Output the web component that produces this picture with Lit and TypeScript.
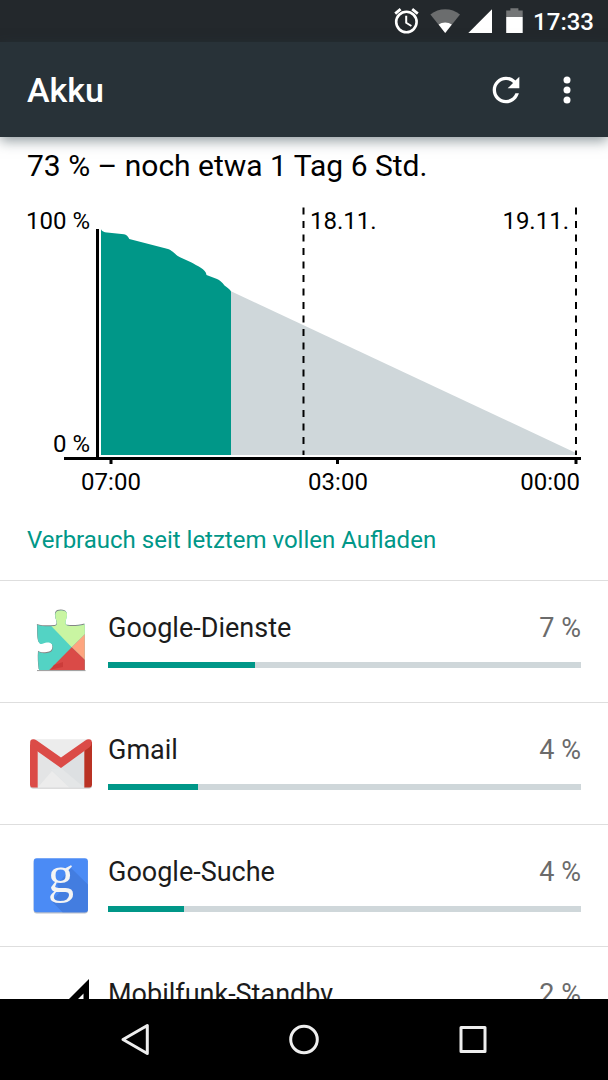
import { LitElement, html, css, svg } from "lit";
import { customElement, property } from "lit/decorators.js";

type IconName = "services" | "gmail" | "search" | "cell";

interface Consumer {
  icon: IconName;
  name: string;
  percent: number;
  bar: number;
}

const CONSUMERS: Consumer[] = [
  { icon: "services", name: "Google-Dienste", percent: 7, bar: 31 },
  { icon: "gmail", name: "Gmail", percent: 4, bar: 19 },
  { icon: "search", name: "Google-Suche", percent: 4, bar: 16 },
  { icon: "cell", name: "Mobilfunk-Standby", percent: 2, bar: 9 },
];

const PIECE =
  "M10.3 17.8C16 19.6 22 19.4 27.5 19C30.6 18.6 30.2 16.4 29.4 13.6C28.5 10.8 28 8.2 28.5 6.4C29.3 4 31.4 3.4 34.2 3.4C37 3.4 39.3 4.2 39.9 6.4C40.3 8.4 39.5 11 38.8 13.6C38.3 16.4 38.2 18.4 41 18.7C46.5 19.2 52 18.8 57.8 17.4V63H12C11.3 57 10.8 51 11.4 44.6C14 46.6 17 46.4 20 46C23.8 45.6 25.8 43.8 25.8 40.4C25.8 36.8 23.6 35.4 20 35.6C17 35.9 14.6 37.8 12.6 36.4C10 34.2 10.6 24 10.3 17.8Z";

const ICONS: Record<IconName, unknown> = {
  services: svg`
    <defs><clipPath id="piece"><path d=${PIECE} /></clipPath></defs>
    <path d=${PIECE} fill="#858585" transform="translate(-0.4 -0.9)" />
    <path d="M10 63.6H58.5" stroke="#9a9a9a" stroke-width="1" />
    <g clip-path="url(#piece)">
      <rect width="68" height="68" fill="#53d3c4" />
      <path d="M8 2.3L44.7 40.3L68 17V0H8Z" fill="#c9f5a2" />
      <path d="M44.7 40.3L68 17V63Z" fill="#fea57f" />
      <path d="M44.7 40.3L68 62.5V68H17.3Z" fill="#da4a47" />
      <path d="M27 58L36 55V60L24 62.5Z" fill="#cc3c3a" />
    </g>`,
  gmail: svg`
    <rect x="3" y="11" width="62" height="48.6" rx="3" fill="#b9b9b9" />
    <rect x="3" y="10.3" width="62" height="48.2" rx="3" fill="#ececec" />
    <path d="M10.7 22L34 38L57.3 22V58.5H10.7Z" fill="#e3e4e5" />
    <path d="M23 40L34 39L57.3 22V58.5H42.5Z" fill="#dde0e2" />
    <path d="M34 39L57.3 58.5H42.5L23 40Z" fill="#e4e6e7" />
    <path d="M10.7 58.5L25 42L42.5 58.5Z" fill="#ececec" />
    <path d="M57.3 14L65 13V55.5Q65 58.5 62 58.5H57.3Z" fill="#b93224" />
    <path d="M10.7 22.5L3.2 16V13.3Q3.2 10.3 6.2 10.3Q8 10.3 9.8 11.5L34 28.4L58.2 11.5Q60 10.3 61.8 10.3Q64.8 10.3 64.8 13.3Q64.8 16 62.8 18L34 39Z" fill="#db4b47" />
    <path d="M3 13.3V55.5Q3 58.5 6 58.5H10.7V21L3.4 15.4Z" fill="#db4b47" />`,
  search: svg`
    <rect x="6.7" y="9" width="54.2" height="53.4" rx="3" fill="#b8bec8" />
    <rect x="6.7" y="7.3" width="54.2" height="53.9" rx="3" fill="#4b8bf5" />
    <path d="M44 17L60.9 33.5V58.2Q60.9 61.2 57.9 61.2H35.5L24.5 50L34 40L30 34Z" fill="#437de0" />
    <text x="21" y="41" font-family="Liberation Serif, serif" font-size="52" fill="#f4f4f4">g</text>`,
  cell: svg`<path d="M62 6V62H6ZM56.5 20.5L20.5 56.5H56.5Z" fill="#000" fill-rule="evenodd" />`,
};

@customElement("status-bar")
export class StatusBar extends LitElement {
  static styles = css`
    :host {
      display: flex;
      align-items: center;
      justify-content: flex-end;
      height: 42px;
      padding-right: 14px;
      background: #23282c;
      color: #fff;
    }
    .icon {
      display: block;
      height: 42px;
    }
    .time {
      margin-left: 9px;
      font-size: 24px;
      line-height: 30px;
      padding-top: 2px;
      font-weight: 500;
    }
  `;

  render() {
    return html`
      <svg class="icon" width="132" height="42" viewBox="392 0 132 42" role="img" aria-label="Wecker, WLAN, Mobilfunk, Akku">
        <g fill="none" stroke="#fff">
          <circle cx="406.4" cy="22" r="10.2" stroke-width="2.6" />
          <path d="M406.2 15.8V22.8L411.4 26" stroke-width="2" />
          <path d="M395.2 13.6L400.6 9.2M412.2 9.2L417.8 13.6" stroke-width="2.8" />
        </g>
        <path d="M430.4 14.4Q437 9.2 445.2 9.2Q453.4 9.2 460 14.4L445.2 33Z" fill="#6b6d6e" />
        <path d="M438.6 24.6Q441.4 22.6 445.2 22.6Q449 22.6 451.8 24.6L445.2 33Z" fill="#fff" />
        <path d="M492 9.3V33H468.3Z" fill="#fff" />
        <path d="M506.2 10.6H510.4V8.3H518.4V10.6H522.7V17H506.2Z" fill="#747677" />
        <path d="M506.2 17H522.7V33H506.2Z" fill="#fff" />
      </svg>
      <span class="time">17:33</span>
    `;
  }
}

@customElement("app-bar")
export class AppBar extends LitElement {
  static styles = css`
    :host {
      display: flex;
      align-items: center;
      gap: 21px;
      height: 95px;
      box-sizing: border-box;
      padding: 0 21px 0 27px;
      background: #283238;
      color: #fff;
      box-shadow: 0 4px 12px rgba(40, 60, 68, 0.5);
      position: relative;
      z-index: 1;
    }
    .title {
      flex: 1;
      margin: 0;
      font-size: 34px;
      line-height: 40px;
      font-weight: 500;
    }
    .action {
      display: block;
      padding: 0;
      border: 0;
      background: none;
      color: inherit;
    }
    .icon {
      display: block;
      fill: currentColor;
    }
  `;

  render() {
    return html`
      <h1 class="title">Akku</h1>
      <button class="action" aria-label="Aktualisieren">
        <svg class="icon" width="40" height="40" viewBox="0 0 24 24">
          <path d="M17.65 6.35C16.2 4.9 14.21 4 12 4c-4.42 0-7.99 3.58-7.99 8s3.57 8 7.99 8c3.73 0 6.84-2.55 7.73-6h-2.08c-.82 2.33-3.04 4-5.65 4-3.31 0-6-2.69-6-6s2.69-6 6-6c1.66 0 3.14.69 4.22 1.78L13 11h7V4l-2.35 2.35z" />
        </svg>
      </button>
      <button class="action" aria-label="Weitere Optionen">
        <svg class="icon" width="40" height="40" viewBox="0 0 24 24">
          <circle cx="12" cy="6" r="2.1" />
          <circle cx="12" cy="12" r="2.1" />
          <circle cx="12" cy="18" r="2.1" />
        </svg>
      </button>
    `;
  }
}

@customElement("battery-chart")
export class BatteryChart extends LitElement {
  static styles = css`
    :host {
      display: block;
    }
    .chart {
      display: block;
      width: 100%;
    }
    .label {
      font-size: 24px;
      fill: #000;
    }
    .end {
      text-anchor: end;
    }
    .middle {
      text-anchor: middle;
    }
    .level {
      fill: #009788;
    }
    .forecast {
      fill: #cfd7da;
    }
    .day {
      stroke: #000;
      stroke-width: 2;
      stroke-dasharray: 7 6.5;
    }
    .axis {
      stroke: #000;
      stroke-width: 3;
      fill: none;
    }
  `;

  render() {
    return html`
      <svg class="chart" viewBox="0 0 608 310" role="img" aria-label="Akkuverlauf">
        <path class="forecast" d="M230.5 101L576 263V265H230.5Z" />
        <path
          class="level"
          d="M101 39.3C102 41.5 104 42.3 107 42.5L124 44.2Q127.5 44.8 129.3 49L167 58.8C173 60.5 174 64 180 67.3L191 72.3C197 76 206 79 206.5 85L217 89Q221 90.5 224.5 95.5C228 98 230 99.5 231 101.5V265H101Z"
        />
        <path class="day" d="M303.5 17.5V265M576 17.5V265" />
        <path class="axis" d="M97.5 39V268M64 268.5H581M111 269V274M337.5 269V274M576 269V274" />
        <text class="label end" x="90" y="39">100 %</text>
        <text class="label end" x="90" y="262">0 %</text>
        <text class="label" x="310" y="39">18.11.</text>
        <text class="label end" x="569" y="39">19.11.</text>
        <text class="label middle" x="111" y="300">07:00</text>
        <text class="label middle" x="338" y="300">03:00</text>
        <text class="label end" x="580" y="300">00:00</text>
      </svg>
    `;
  }
}

@customElement("consumer-row")
export class ConsumerRow extends LitElement {
  @property({ attribute: false }) item!: Consumer;

  static styles = css`
    :host {
      display: block;
      border-top: 1px solid #dedede;
    }
    .row {
      display: flex;
      gap: 13px;
      width: 100%;
      padding: 26px 27px 27px;
      border: 0;
      background: none;
      font: inherit;
      color: inherit;
      text-align: left;
    }
    .icon {
      flex: none;
      display: block;
    }
    .body {
      flex: 1;
      display: flex;
      flex-direction: column;
      gap: 18px;
      padding-top: 5px;
    }
    .line {
      display: flex;
      justify-content: space-between;
      font-size: 27px;
      line-height: 32px;
    }
    .percent {
      color: #6b6b6b;
    }
    .bar {
      appearance: none;
      display: block;
      width: 100%;
      height: 6px;
      border: 0;
      background: #cfd7da;
    }
    .bar::-webkit-progress-bar {
      background: #cfd7da;
    }
    .bar::-webkit-progress-value {
      background: #009788;
    }
  `;

  render() {
    const { icon, name, percent, bar } = this.item;
    return html`
      <button class="row">
        <svg class="icon" width="68" height="68" viewBox="0 0 68 68" aria-hidden="true">${ICONS[icon]}</svg>
        <span class="body">
          <span class="line"><span>${name}</span><span class="percent">${percent} %</span></span>
          <progress class="bar" max="100" value=${bar} aria-label=${name}></progress>
        </span>
      </button>
    `;
  }
}

@customElement("nav-bar")
export class NavBar extends LitElement {
  static styles = css`
    :host {
      display: flex;
      justify-content: center;
      height: 81px;
      background: #000;
    }
    .key {
      display: flex;
      align-items: center;
      justify-content: center;
      width: 169px;
      padding: 0;
      border: 0;
      background: none;
    }
    .icon {
      fill: none;
      stroke: #eee;
      stroke-width: 3;
      stroke-linejoin: round;
    }
  `;

  render() {
    return html`
      <button class="key" aria-label="Zurück">
        <svg class="icon" width="40" height="40" viewBox="0 0 40 40"><path d="M32.3 5.5V33.5L8 19.5Z" /></svg>
      </button>
      <button class="key" aria-label="Startbildschirm">
        <svg class="icon" width="40" height="40" viewBox="0 0 40 40"><circle cx="20" cy="19.5" r="13.3" /></svg>
      </button>
      <button class="key" aria-label="Letzte Apps">
        <svg class="icon" width="40" height="40" viewBox="0 0 40 40"><rect x="8" y="7.5" width="24" height="24" /></svg>
      </button>
    `;
  }
}

@customElement("app-root")
export class AppRoot extends LitElement {
  static styles = css`
    :host {
      display: flex;
      flex-direction: column;
      height: 100vh;
      overflow: hidden;
      background: #fff;
      color: #1c1c1c;
      font-family: Roboto, "Noto Sans", sans-serif;
    }
    .top,
    .nav {
      flex: none;
    }
    .content {
      flex: 1;
      min-height: 0;
      overflow: hidden;
    }
    .summary {
      margin: 0;
      padding: 11px 27px 6px;
      font-size: 30px;
      line-height: 36px;
      font-weight: 400;
      color: #000;
    }
    .category {
      margin: 0;
      padding: 26px 27px;
      font-size: 24px;
      line-height: 28px;
      font-weight: 400;
      color: #009788;
    }
    .list {
      margin: 0;
      padding: 0;
      list-style: none;
    }
  `;

  render() {
    return html`
      <status-bar class="top"></status-bar>
      <app-bar class="top"></app-bar>
      <main class="content">
        <p class="summary">73 % – noch etwa 1 Tag 6 Std.</p>
        <battery-chart></battery-chart>
        <h2 class="category">Verbrauch seit letztem vollen Aufladen</h2>
        <ul class="list">
          ${CONSUMERS.map((item) => html`<li><consumer-row .item=${item}></consumer-row></li>`)}
        </ul>
      </main>
      <nav-bar class="nav"></nav-bar>
    `;
  }
}
